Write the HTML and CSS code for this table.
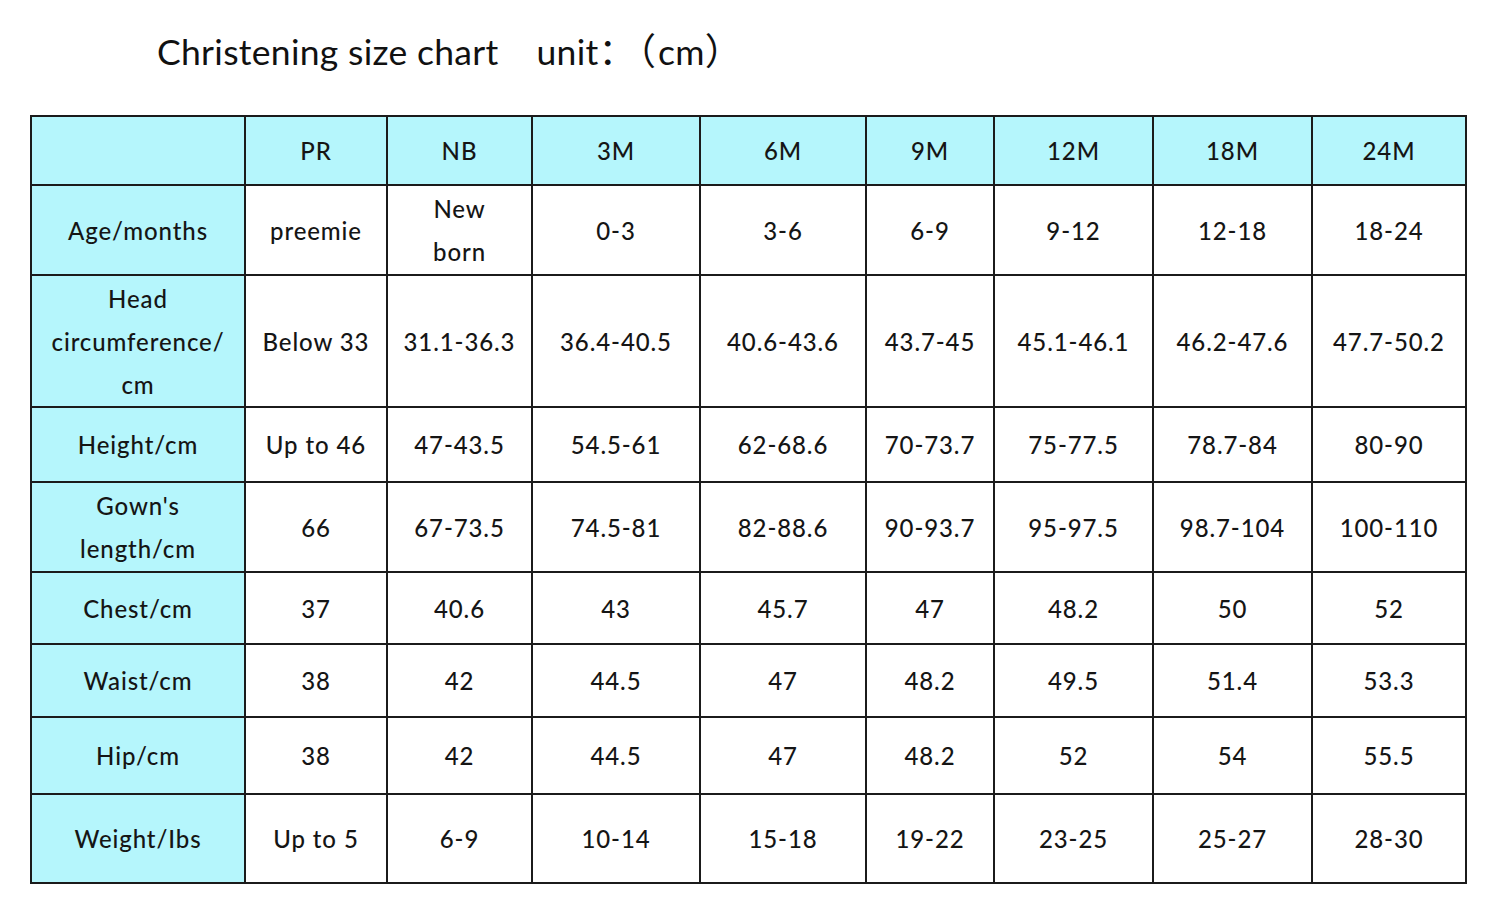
FILE: index.html
```html
<!DOCTYPE html>
<html lang="en">
<head>
<meta charset="utf-8">
<title>Christening size chart</title>
<link rel="stylesheet" href="styles.css">
</head>
<body>
<div class="page">
  <h1 class="title"><span>Christening size chart</span><span class="unit">unit<span class="cjk">：（</span>cm<span class="cjk">）</span></span></h1>
  <table class="chart">
    <colgroup>
      <col class="c0"><col class="c1"><col class="c2"><col class="c3"><col class="c4"><col class="c5"><col class="c6"><col class="c7"><col class="c8">
    </colgroup>
    <thead>
      <tr class="r0">
        <th></th><th>PR</th><th>NB</th><th>3M</th><th>6M</th><th>9M</th><th>12M</th><th>18M</th><th>24M</th>
      </tr>
    </thead>
    <tbody>
      <tr class="r1"><th>Age/months</th><td>preemie</td><td>New<br>born</td><td>0-3</td><td>3-6</td><td>6-9</td><td>9-12</td><td>12-18</td><td>18-24</td></tr>
      <tr class="r2"><th>Head<br>circumference/<br>cm</th><td>Below 33</td><td>31.1-36.3</td><td>36.4-40.5</td><td>40.6-43.6</td><td>43.7-45</td><td>45.1-46.1</td><td>46.2-47.6</td><td>47.7-50.2</td></tr>
      <tr class="r3"><th>Height/cm</th><td>Up to 46</td><td>47-43.5</td><td>54.5-61</td><td>62-68.6</td><td>70-73.7</td><td>75-77.5</td><td>78.7-84</td><td>80-90</td></tr>
      <tr class="r4"><th>Gown's<br>length/cm</th><td>66</td><td>67-73.5</td><td>74.5-81</td><td>82-88.6</td><td>90-93.7</td><td>95-97.5</td><td>98.7-104</td><td>100-110</td></tr>
      <tr class="r5"><th>Chest/cm</th><td>37</td><td>40.6</td><td>43</td><td>45.7</td><td>47</td><td>48.2</td><td>50</td><td>52</td></tr>
      <tr class="r6"><th>Waist/cm</th><td>38</td><td>42</td><td>44.5</td><td>47</td><td>48.2</td><td>49.5</td><td>51.4</td><td>53.3</td></tr>
      <tr class="r7"><th>Hip/cm</th><td>38</td><td>42</td><td>44.5</td><td>47</td><td>48.2</td><td>52</td><td>54</td><td>55.5</td></tr>
      <tr class="r8"><th>Weight/Ibs</th><td>Up to 5</td><td>6-9</td><td>10-14</td><td>15-18</td><td>19-22</td><td>23-25</td><td>25-27</td><td>28-30</td></tr>
    </tbody>
  </table>
</div>
</body>
</html>
```

FILE: styles.css
```css
html, body {
  margin: 0;
  padding: 0;
  background: #ffffff;
}

body {
  font-family: "Lato", "Open Sans", "Liberation Sans", sans-serif;
  color: #1c1c1c;
}

.page {
  width: 1500px;
  height: 916px;
  padding: 30px 0 0 30px;
  box-sizing: border-box;
}

.title {
  margin: 0 0 41px 127px;
  height: 44px;
  font-weight: 400;
  font-size: 35.5px;
  line-height: 44px;
  letter-spacing: 0.3px;
  color: #111111;
  display: flex;
  align-items: baseline;
  gap: 38px;
}

.cjk {
  font-family: "Noto Sans CJK SC", sans-serif;
  font-size: 37px;
  line-height: 1;
  letter-spacing: 2px;
}

.chart {
  border-collapse: collapse;
  table-layout: fixed;
  width: 1435px;
  border: 2px solid #1b1b1b;
}

.chart th,
.chart td {
  border: 2px solid #1b1b1b;
  padding: 0;
  text-align: center;
  vertical-align: middle;
  font-size: 24px;
  font-weight: 500;
  line-height: 43px;
  letter-spacing: 0.9px;
  color: #151515;
}

.chart thead th,
.chart tbody th {
  background: #b5f6fc;
}

.chart td {
  background: #ffffff;
}

.c0 { width: 214px; }
.c1 { width: 142px; }
.c2 { width: 145px; }
.c3 { width: 168px; }
.c4 { width: 166px; }
.c5 { width: 128px; }
.c6 { width: 159px; }
.c7 { width: 159px; }
.c8 { width: 154px; }

.r0 { height: 69px; }
.r1 { height: 90px; }
.r2 { height: 132px; }
.r3 { height: 75px; }
.r4 { height: 90px; }
.r5 { height: 72px; }
.r6 { height: 73px; }
.r7 { height: 77px; }
.r8 { height: 89px; }
```
